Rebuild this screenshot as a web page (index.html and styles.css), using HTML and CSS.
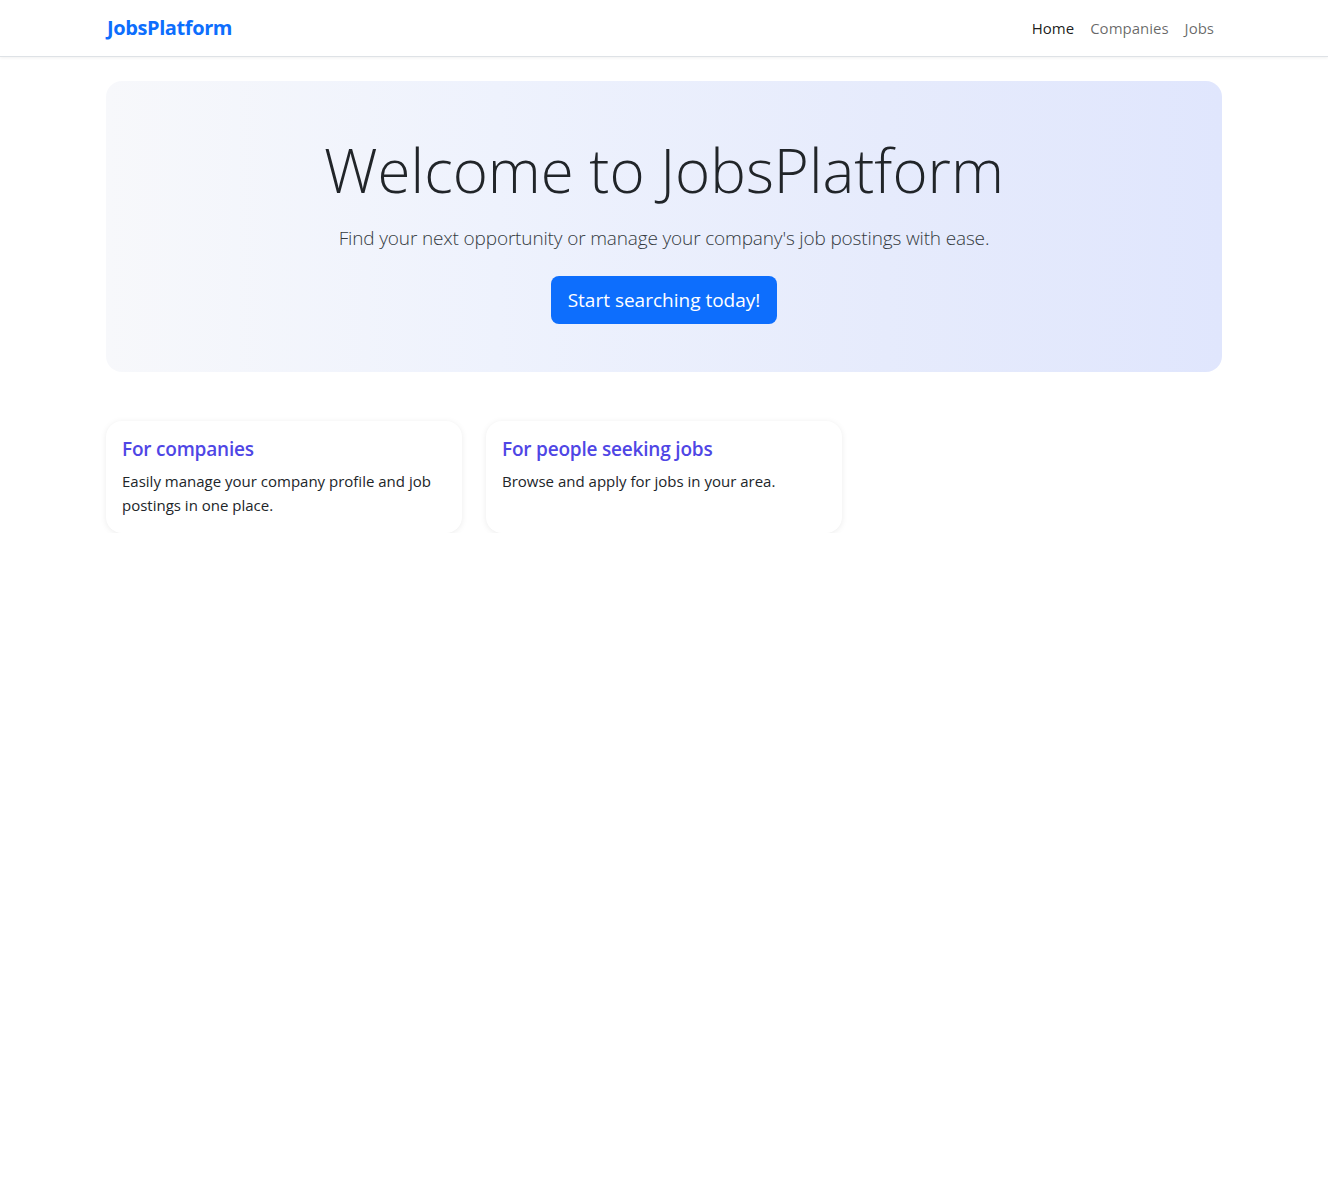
FILE: index.html
```html
<!DOCTYPE html>
<html lang="en">
<head>
<meta charset="utf-8">
<title>JobsPlatform</title>
<link rel="stylesheet" href="styles.css">
</head>
<body>
<nav class="navbar">
  <div class="container nav-inner">
    <a class="brand" href="#">JobsPlatform</a>
    <ul class="nav-links">
      <li><a class="nav-link active" href="#">Home</a></li>
      <li><a class="nav-link" href="#">Companies</a></li>
      <li><a class="nav-link" href="#">Jobs</a></li>
    </ul>
  </div>
</nav>
<main class="container">
  <section class="hero">
    <h1 class="hero-title">Welcome to JobsPlatform</h1>
    <p class="lead">Find your next opportunity or manage your company's job postings with ease.</p>
    <a class="btn" href="#">Start searching today!</a>
  </section>
  <section class="cards">
    <div class="card">
      <h5 class="card-title">For companies</h5>
      <p class="card-text">Easily manage your company profile and job postings in one place.</p>
    </div>
    <div class="card">
      <h5 class="card-title">For people seeking jobs</h5>
      <p class="card-text">Browse and apply for jobs in your area.</p>
    </div>
  </section>
</main>
</body>
</html>
```
FILE: styles.css
```css
* { box-sizing: border-box; }
html, body { margin: 0; padding: 0; }
body {
  font-family: "Open Sans", "Noto Sans", sans-serif;
  font-size: 16px;
  line-height: 1.5;
  color: #212529;
  background: #fff;
}
a { text-decoration: none; }
.container {
  max-width: 1140px;
  margin: 0 auto;
  padding: 0 12px;
}
.navbar {
  height: 57px;
  background: #fff;
  border-bottom: 1px solid #dee2e6;
  box-shadow: 0 1px 3px rgba(0,0,0,0.06);
}
.nav-inner {
  display: flex;
  align-items: center;
  justify-content: space-between;
  height: 56px;
}
.brand {
  color: #0d6efd;
  font-weight: 700;
  font-size: 20px;
  margin-left: 1px;
  letter-spacing: -0.4px;
}
.nav-links {
  list-style: none;
  margin: 0;
  padding: 0;
  display: flex;
}
.nav-link {
  display: block;
  padding: 8px;
  color: rgba(0,0,0,0.6);
  font-size: 15px;
}
.nav-link.active { color: rgba(0,0,0,0.9); }
.hero {
  margin-top: 24px;
  padding: 48px 16px;
  border-radius: 16px;
  background: linear-gradient(90deg, #f7f8fb 0%, #eef2fd 35%, #e6ebfc 70%, #e0e6fd 100%);
  text-align: center;
}
.hero-title {
  margin: 5px 0 17px;
  font-size: 60px;
  font-weight: 300;
  line-height: 72px;
  color: #212529;
  letter-spacing: 0;
}
.lead {
  margin: 0 0 23px;
  font-size: 19px;
  font-weight: 300;
  line-height: 30px;
  color: #343a40;
  letter-spacing: -0.15px;
}
.btn {
  display: inline-block;
  background: #0d6efd;
  color: #fff;
  font-size: 19px;
  line-height: 30px;
  padding: 9px 17px;
  border-radius: 8px;
}
.cards {
  margin-top: 49px;
  display: grid;
  grid-template-columns: repeat(3, 1fr);
  gap: 24px;
}
.card {
  background: #fff;
  border-radius: 16px;
  padding: 16px;
  box-shadow: 0 1px 6px rgba(0,0,0,0.08);
}
.card-title {
  margin: 0 0 8px;
  font-size: 19px;
  line-height: 24px;
  font-weight: 600;
  color: #4f46e5;
  letter-spacing: -0.2px;
}
.card-text {
  margin: 0;
  font-size: 15px;
  line-height: 24px;
  color: #212529;
}
```
